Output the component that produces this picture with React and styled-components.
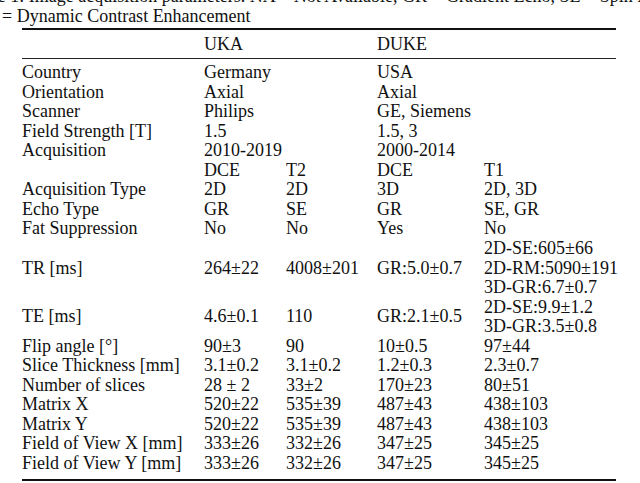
import styled, { createGlobalStyle } from "styled-components";

const GlobalStyle = createGlobalStyle`
  html {
    overflow: hidden;
    background: #ffffff;
  }
  body {
    margin: 0;
    padding: 0;
  }
`;

const rows = [
  { label: "Country", cells: [["Germany", 2], null, ["USA", 2]] },
  { label: "Orientation", cells: [["Axial", 2], null, ["Axial", 2]] },
  { label: "Scanner", cells: [["Philips", 2], null, ["GE, Siemens", 2]] },
  { label: "Field Strength [T]", cells: [["1.5", 2], null, ["1.5, 3", 2]] },
  { label: "Acquisition", cells: [["2010-2019", 2], null, ["2000-2014", 2]] },
  { label: "", cells: [["DCE"], ["T2"], ["DCE"], ["T1"]] },
  { label: "Acquisition Type", cells: [["2D"], ["2D"], ["3D"], ["2D, 3D"]] },
  { label: "Echo Type", cells: [["GR"], ["SE"], ["GR"], ["SE, GR"]] },
  { label: "Fat Suppression", cells: [["No"], ["No"], ["Yes"], ["No"]] },
];

const lowerRows = [
  { label: "Flip angle [°]", cells: ["90±3", "90", "10±0.5", "97±44"] },
  { label: "Slice Thickness [mm]", cells: ["3.1±0.2", "3.1±0.2", "1.2±0.3", "2.3±0.7"] },
  { label: "Number of slices", cells: ["28 ± 2", "33±2", "170±23", "80±51"] },
  { label: "Matrix X", cells: ["520±22", "535±39", "487±43", "438±103"] },
  { label: "Matrix Y", cells: ["520±22", "535±39", "487±43", "438±103"] },
  { label: "Field of View X [mm]", cells: ["333±26", "332±26", "347±25", "345±25"] },
  { label: "Field of View Y [mm]", cells: ["333±26", "332±26", "347±25", "345±25"] },
];

export default function App() {
  return (
    <>
      <GlobalStyle />
      <Page>
        <Caption>
          <CaptionLine $indent>
            Table 1: Image acquisition parameters. NA = Not Available, GR = Gradient Echo, SE = Spin Echo, DCE
          </CaptionLine>
          <CaptionLine>= Dynamic Contrast Enhancement</CaptionLine>
        </Caption>
        <Table>
          <HeadRow>
            <Cell />
            <Cell $span={2}>UKA</Cell>
            <Cell $span={2}>DUKE</Cell>
          </HeadRow>
          <Body>
            {rows.map((r, i) => [
              <Cell key={`l${i}`}>{r.label}</Cell>,
              ...r.cells.map((c, j) =>
                c ? (
                  <Cell key={`c${i}-${j}`} $span={c[1] || 1}>
                    {c[0]}
                  </Cell>
                ) : null
              ),
            ])}

            <Cell $rows={3}>TR [ms]</Cell>
            <Cell $rows={3}>264±22</Cell>
            <Cell $rows={3}>4008±201</Cell>
            <Cell $rows={3}>GR:5.0±0.7</Cell>
            <Stack $rows={3}>
              <span>2D-SE:605±66</span>
              <span>2D-RM:5090±191</span>
              <span>3D-GR:6.7±0.7</span>
            </Stack>

            <Cell $rows={2}>TE [ms]</Cell>
            <Cell $rows={2}>4.6±0.1</Cell>
            <Cell $rows={2}>110</Cell>
            <Cell $rows={2}>GR:2.1±0.5</Cell>
            <Stack $rows={2}>
              <span>2D-SE:9.9±1.2</span>
              <span>3D-GR:3.5±0.8</span>
            </Stack>

            {lowerRows.map((r, i) => [
              <Cell key={`ll${i}`}>{r.label}</Cell>,
              ...r.cells.map((c, j) => <Cell key={`lc${i}-${j}`}>{c}</Cell>),
            ])}
          </Body>
        </Table>
      </Page>
    </>
  );
}

//style
const LINE = "19.55px";
const COLS = "182px 82px 91px 107px 1fr";

const Page = styled.div`
  display: flow-root;
  width: 640px;
  height: 483px;
  overflow: hidden;
  padding-left: 2px;
  box-sizing: border-box;
  font-family: "Liberation Serif", "Times New Roman", serif;
  font-size: 18px;
  color: #111;
`;

const Caption = styled.div`
  margin-top: -13px;
  line-height: ${LINE};
`;

const CaptionLine = styled.div`
  white-space: nowrap;
  margin-left: ${(p) => (p.$indent ? "-36px" : "0")};
`;

const Table = styled.div`
  margin: 1.5px 0 0 20px;
  width: 594px;
  border-top: 2px solid #111;
  border-bottom: 2px solid #111;
`;

const HeadRow = styled.div`
  display: grid;
  grid-template-columns: ${COLS};
  line-height: 28px;
  border-bottom: 1px solid #222;
`;

const Body = styled.div`
  display: grid;
  grid-template-columns: ${COLS};
  grid-auto-rows: ${LINE};
  line-height: ${LINE};
  padding: 4.5px 0 5.5px;
`;

const Cell = styled.div`
  white-space: nowrap;
  grid-column: span ${(p) => p.$span || 1};
  grid-row: span ${(p) => p.$rows || 1};
  align-self: center;
`;

const Stack = styled.div`
  display: flex;
  flex-direction: column;
  white-space: nowrap;
  grid-row: span ${(p) => p.$rows || 1};
`;
